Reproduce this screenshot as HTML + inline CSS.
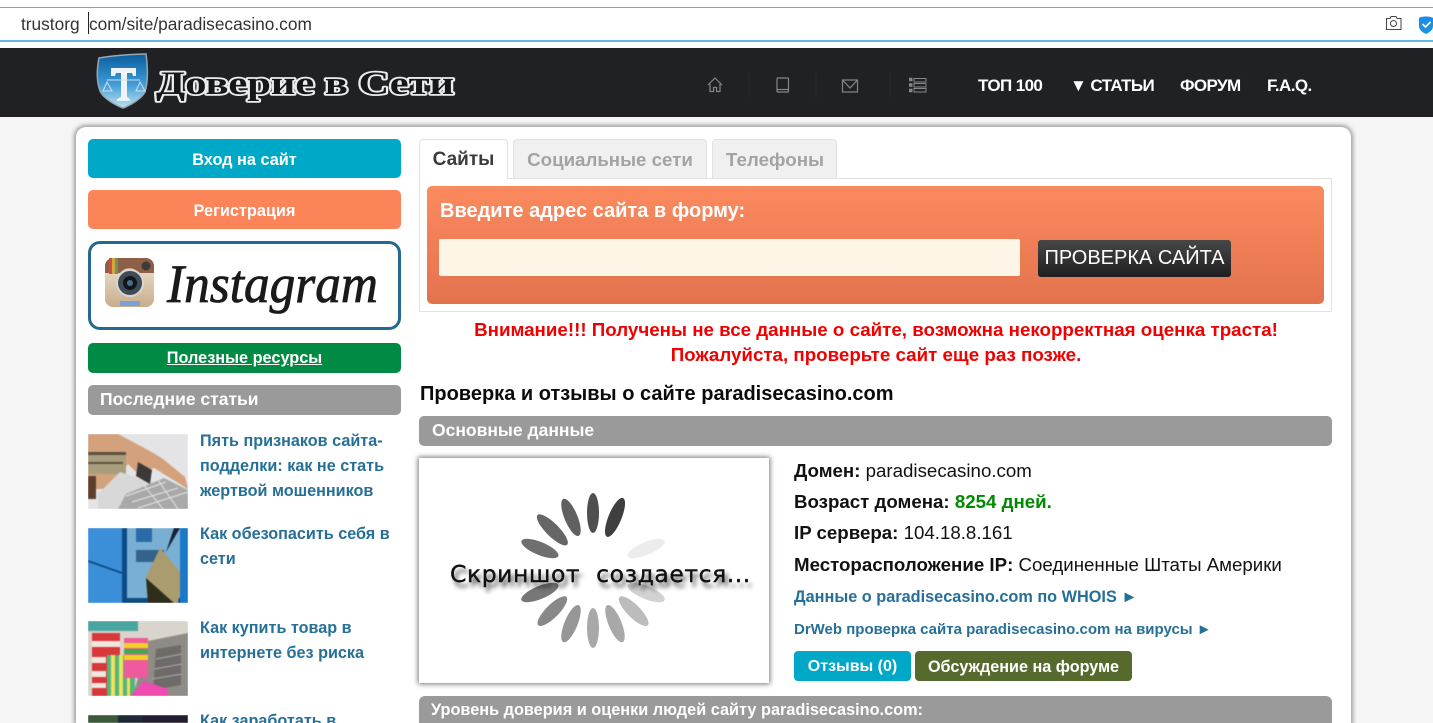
<!DOCTYPE html>
<html lang="ru"><head><meta charset="utf-8"><title>Доверие в Сети</title>
<style>
*{box-sizing:border-box}
html,body{margin:0;padding:0;width:1433px;height:723px;overflow:hidden;background:#f5f5f5;font-family:"Liberation Sans",Arial,sans-serif}
body{position:relative}
.a{position:absolute}
.t{position:absolute;white-space:nowrap;line-height:1}
.btn{position:absolute;border-radius:5px;color:#fff;font-weight:bold;text-align:center;white-space:nowrap}
.link{color:#266f96;font-weight:bold;font-size:16.2px;position:absolute;left:200px;line-height:25px;white-space:nowrap}
.nav{position:absolute;top:77px;color:#fff;font-weight:bold;font-size:17px;letter-spacing:-.6px;line-height:18px;white-space:nowrap}
.thumb{position:absolute;left:88px;width:100px;height:75px;overflow:hidden}
.thumb svg{display:block;filter:blur(.6px)}
.row{position:absolute;left:794px;font-size:18.7px;line-height:22px;color:#111;white-space:nowrap}
.row b{color:#111}
</style></head><body>
<!-- address bar -->
<div class="a" style="left:0;top:0;width:1433px;height:48px;background:#fff"></div>
<div class="a" style="left:0;top:7px;width:1433px;height:1px;background:#4fb2ee"></div>
<div class="a" style="left:0;top:40px;width:1433px;height:2px;background:#62b7e6"></div>
<div class="t" style="left:21px;top:15px;font-size:17.3px;color:#333;line-height:19px">trustorg</div>
<div class="t" style="left:89px;top:15px;font-size:17.3px;color:#333;line-height:19px">com/site/paradisecasino.com</div>
<div class="a" style="left:88px;top:12px;width:1px;height:22px;background:#222"></div>
<svg class="a" style="left:1385px;top:15px" width="48" height="20" viewBox="0 0 48 20">
<path d="M1.500 3.500h3.500l1-2h5l1 2h4v11h-14.500z" fill="none" stroke="#444" stroke-width="1"/><circle cx="8.500" cy="8.500" r="3" fill="none" stroke="#444"/>
<path d="M34 3c2-2 12-2 14 0v8c0 4-3 6-7 8-4-2-7-4-7-8z" fill="#1a8fe3"/><path d="M37.500 9l3 3 5-5" fill="none" stroke="#fff" stroke-width="1.600"/>
</svg>
<!-- header -->
<div class="a" style="left:0;top:48px;width:1433px;height:69px;background:#1f2124"></div>
<svg class="a" style="left:90px;top:48px" width="380" height="66" viewBox="0 0 380 66">
<defs><linearGradient id="sh" x1="0" y1="0" x2="0" y2="1"><stop offset="0" stop-color="#0a5d9e"/><stop offset=".55" stop-color="#3d9ad6"/><stop offset="1" stop-color="#bfe3f3"/></linearGradient></defs>
<path d="M9 10C20 8 42 6 56 6c2 13 2 29-1 38-4 7-14 13-22 16C25 57 13 50 10 43 6 32 7 20 9 10z" fill="url(#sh)" stroke="#9aa6b0" stroke-width="1.500"/>
<path d="M21 20h25v8h-3l-1-3h-5v24l3 2v2H27v-2l4-2V25h-5l-1 3h-4z" fill="#eef4f8"/>
<path d="M17 34l-4 9h9zM50 34l-4 9h9zM17 32h33" fill="none" stroke="#cfe0ea" stroke-width="1"/>
<text x="66" y="46" font-family="Liberation Serif,serif" font-size="33" font-weight="bold" textLength="298" lengthAdjust="spacingAndGlyphs" fill="#15171a" stroke="#ececec" stroke-width="3.600" stroke-linejoin="round" paint-order="stroke">Доверие в Сети</text>
</svg>
<svg class="a" style="left:700px;top:70px" width="240" height="30" viewBox="0 0 240 30" fill="none" stroke="#85888b" stroke-width="1.200">
<path d="M8 15l7-7 7 7M10 14v7.500h3.500v-4h3v4H20V14"/>
<path d="M49 3v24M116 3v24M190 3v24" stroke="#292b2e"/>
<rect x="77" y="8" width="11.500" height="14" rx="1"/><path d="M77 19.500h11.500" />
<rect x="142.500" y="10" width="15" height="12"/><path d="M142.500 10l7.500 8 7.500-8"/>
<path d="M209 9.500h3.500M209 15h3.500M209 20.500h3.500" stroke-width="3.500"/><path d="M214 8.500h12v3.500h-12zM214 13.500h12v3.500h-12zM214 18.500h12v3.500h-12z" stroke-width="1"/>
</svg>
<div class="nav" style="left:978px">ТОП 100</div>
<div class="nav" style="left:1070px">▼ СТАТЬИ</div>
<div class="nav" style="left:1180px">ФОРУМ</div>
<div class="nav" style="left:1267px">F.A.Q.</div>
<!-- card -->
<div class="a" style="left:76px;top:127px;width:1275px;height:596px;background:#fff;border-radius:10px 10px 0 0;box-shadow:0 0 4px 2px #9c9c9c;clip-path:inset(-6px -6px 0 -6px)"></div>
<!-- sidebar -->
<div class="btn" style="left:88px;top:139px;width:313px;height:39px;background:#00a8c8;font-size:16.3px;line-height:42px">Вход на сайт</div>
<div class="btn" style="left:88px;top:190px;width:313px;height:39px;background:#fb8459;font-size:16.3px;line-height:42px">Регистрация</div>
<div class="a" style="left:88px;top:241px;width:313px;height:89px;border:3px solid #24698f;border-radius:12px;background:#fff"></div>
<svg class="a" style="left:105px;top:258px" width="50" height="50" viewBox="0 0 50 50">
<defs><linearGradient id="ig" x1="0" y1="0" x2="0" y2="1"><stop offset="0" stop-color="#f0e6d6"/><stop offset="1" stop-color="#c9ad8c"/></linearGradient></defs>
<rect width="49" height="49" rx="8" fill="url(#ig)"/><path d="M0 15V8a8 8 0 0 1 8-8h33a8 8 0 0 1 8 8v7H34a12 12 0 0 0-19 0z" fill="#8d5f46"/>
<path d="M4 0h3v16H4z" fill="#c8503c"/><path d="M7 0h3v16H7z" fill="#d9a33d"/><path d="M10 0h3v16h-3z" fill="#5d9a68"/>
<circle cx="25" cy="25" r="13" fill="#3f4b55" stroke="#d6d6d2" stroke-width="2"/><circle cx="25" cy="25" r="7" fill="#10161c"/><circle cx="25" cy="25" r="3" fill="#4d6f8f"/><circle cx="41" cy="8" r="4.500" fill="#3d3a3a"/><rect x="15" y="43" width="20" height="5" fill="#7aa0d8"/>
</svg>
<div class="t" style="left:167px;top:254px;font-family:'Liberation Serif',serif;font-style:italic;font-size:54px;color:#1a1a1a;line-height:60px;-webkit-text-stroke:.8px #1a1a1a;transform-origin:0 0;transform:scaleX(.95)">Instagram</div>
<div class="btn" style="left:88px;top:343px;width:313px;height:30px;background:#008a43;font-size:16.3px;line-height:30px;text-decoration:underline">Полезные ресурсы</div>
<div class="a" style="left:88px;top:385px;width:313px;height:30px;background:#9a9a9a;border-radius:5px;color:#fff;font-weight:bold;font-size:17.5px;line-height:29px;padding-left:12px">Последние статьи</div>
<div class="thumb" style="top:434px"><svg width="100" height="75"><rect width="100" height="75" fill="#e4e4e6"/><path d="M0 0h30c15 8 35 18 45 25l22 18 3 12L66 34 50 40 40 30 20 55H0z" fill="#d3a27c"/><path d="M0 18h38v22H0z" fill="#a99e7c"/><path d="M0 18h38v3H0zM0 28h35v2H0z" fill="#5c5140"/><path d="M0 42h8v23H0z" fill="#5e3f2c"/><path d="M10 60l22-22 68 22v15H10z" fill="#d8d8d8"/><path d="M38 60l38-16 24 12v19H30z" fill="#a9a9a9"/><path d="M38 62l40-14M44 68l46-14M50 74l50-16M55 50l20 25M70 46l20 29" stroke="#e6e6e6" fill="none"/><path d="M50 28l14 8-2 14-14-8z" fill="#3c3a38"/></svg></div>
<div class="thumb" style="top:528px"><svg width="100" height="75"><rect width="100" height="75" fill="#2a7fc9"/><path d="M0 0h34v75H0z" fill="#3b8fd8"/><path d="M0 32l34 12v2L0 34z" fill="#0f4d86"/><rect x="36" y="0" width="64" height="75" fill="#7aafd4"/><path d="M34 0h5v75h-5zM36 70h64v5H36z" fill="#0e4b84"/><rect x="48" y="0" width="16" height="14" fill="#2a6ca8"/><rect x="48" y="22" width="28" height="12" fill="#33628c"/><path d="M72 20l22 26-4 29H62l-4-26z" fill="#aa9c6e"/><path d="M58 50l28 25H60z" fill="#2f2d1c"/><path d="M86 0h6L78 24z" fill="#12243a"/><rect x="92" width="8" height="75" fill="#1a78c8"/></svg></div>
<div class="thumb" style="top:621px"><svg width="100" height="75"><rect width="100" height="75" fill="#d9d5cc"/><path d="M60 20l40-8v63H45z" fill="#8f8b86"/><path d="M68 28l25-4v40l-28 5z" fill="#6e6b68"/><path d="M68 38l26-5M66 48l28-5M64 58l30-5" stroke="#b0aca8" fill="none"/><rect x="4" y="12" width="28" height="63" fill="#d8383a"/><path d="M4 20h28v6H4zM4 36h14v6H4zM4 50h14v6H4zM4 62h14v5H4z" fill="#f1e7dd"/><rect x="19" y="34" width="28" height="41" fill="#55b57e"/><path d="M23 34h4v41h-4zM31 34h4v41h-4zM39 34h3v41h-3z" fill="#efe35a"/><rect x="36" y="17" width="24" height="40" fill="#ee5a9c"/><path d="M36 22h24v5H36zM36 34h24v5H36z" fill="#f3d024"/><path d="M36 28h24v5H36z" fill="#44a853"/><path d="M42 75l14-15 24 8v7z" fill="#f04bb1"/><rect width="50" height="10" fill="#4aa6a0"/></svg></div>
<div class="thumb" style="top:715px;height:8px"><svg width="100" height="8"><rect width="100" height="8" fill="#1d2a38"/><rect width="30" height="8" fill="#3a5a3a"/><rect x="55" width="45" height="8" fill="#241c30"/></svg></div>
<div class="link" style="top:429px">Пять признаков сайта-<br>подделки: как не стать<br>жертвой мошенников</div>
<div class="link" style="top:522px">Как обезопасить себя в<br>сети</div>
<div class="link" style="top:616px">Как купить товар в<br>интернете без риска</div>
<div class="link" style="top:709px;height:14px;overflow:hidden">Как заработать в</div>
<!-- tabs -->
<div class="a" style="left:419px;top:178px;width:913px;height:134px;border:1px solid #e2e2e2"></div>
<div class="a" style="left:419px;top:139px;width:89px;height:40px;background:#fff;border:1px solid #e2e2e2;border-bottom:0;border-radius:4px 4px 0 0;font-weight:bold;font-size:19px;color:#3b3b3b;text-align:center;line-height:39px">Сайты</div>
<div class="a" style="left:513px;top:139px;width:194px;height:39px;background:#f0f0f0;border:1px solid #e2e2e2;border-bottom:0;border-radius:4px 4px 0 0;font-weight:bold;font-size:18.7px;color:#a3a3a3;text-align:center;line-height:39px">Социальные сети</div>
<div class="a" style="left:712px;top:139px;width:125px;height:39px;background:#f0f0f0;border:1px solid #e2e2e2;border-bottom:0;border-radius:4px 4px 0 0;font-weight:bold;font-size:18.8px;color:#a3a3a3;text-align:center;line-height:39px;padding-left:1px">Телефоны</div>
<!-- form -->
<div class="a" style="left:427px;top:186px;width:897px;height:118px;border-radius:5px;background:linear-gradient(#fc8a5f,#e2734d)"></div>
<div class="t" style="left:440px;top:200px;color:#fff;font-weight:bold;font-size:20px;line-height:22px">Введите адрес сайта в форму:</div>
<div class="a" style="left:439px;top:239px;width:581px;height:37px;background:#fdf5e6;border-radius:2px"></div>
<div class="a" style="left:1038px;top:240px;width:193px;height:37px;background:linear-gradient(#474747,#1f1f1f);border-radius:3px;color:#fff;font-size:20px;line-height:36px;text-align:center;white-space:nowrap">ПРОВЕРКА САЙТА</div>
<!-- warning -->
<div class="a" style="left:418px;top:317px;width:916px;color:#f00000;font-weight:bold;font-size:18.75px;line-height:25px;text-align:center;white-space:nowrap">Внимание!!! Получены не все данные о сайте, возможна некорректная оценка траста!<br>Пожалуйста, проверьте сайт еще раз позже.</div>
<div class="t" style="left:420px;top:383px;font-weight:bold;font-size:20px;line-height:23px;color:#0b0b0b">Проверка и отзывы о сайте paradisecasino.com</div>
<div class="a" style="left:419px;top:416px;width:913px;height:30px;background:#9a9a9a;border-radius:5px;color:#fff;font-weight:bold;font-size:17.5px;line-height:29px;padding-left:13px">Основные данные</div>
<!-- screenshot box -->
<div class="a" style="left:419px;top:458px;width:350px;height:225px;background:#fff;box-shadow:0 0 5px 1px #777"></div>
<svg class="a" style="left:419px;top:458px" width="350" height="225" viewBox="0 0 350 225">
<g transform="translate(174,112.500)">
<ellipse cy="-57.500" rx="6" ry="20" fill="#4f4f4f"/>
<ellipse cy="-57.500" rx="6.500" ry="21" fill="#3f3f3f" transform="rotate(22.500)"/>
<ellipse cy="-57.500" rx="6.500" ry="20" fill="#606060" transform="rotate(-22.500)"/>
<ellipse cy="-57.500" rx="6.500" ry="21" fill="#666" transform="rotate(-45)"/>
<ellipse cy="-57.500" rx="6.500" ry="20" fill="#6f6f6f" transform="rotate(-67.500)"/>
<ellipse cy="-57.500" rx="6.500" ry="20" fill="#777" transform="rotate(-112.500)"/>
<ellipse cy="-57.500" rx="6.500" ry="20" fill="#888" transform="rotate(-135)"/>
<ellipse cy="-57.500" rx="6.500" ry="20" fill="#969696" transform="rotate(-157.500)"/>
<ellipse cy="-57.500" rx="6" ry="20" fill="#a8a8a8" transform="rotate(180)"/>
<ellipse cy="-57.500" rx="6.500" ry="20" fill="#a8a8a8" transform="rotate(157.500)"/>
<ellipse cy="-57.500" rx="6.500" ry="20" fill="#bcbcbc" transform="rotate(135)"/>
<ellipse cy="-57.500" rx="6.500" ry="20" fill="#d2d2d2" transform="rotate(112.500)"/>
<ellipse cy="-57.500" rx="6.500" ry="20" fill="#ececec" transform="rotate(67.500)"/>
</g></svg>
<div class="t" style="left:450px;top:560px;font-family:'DejaVu Sans',sans-serif;font-size:23.5px;line-height:28px;letter-spacing:.55px;color:#111;-webkit-text-stroke:.4px #111;text-shadow:3px 5px 5px rgba(0,0,0,.75)">Скриншот&nbsp; создается...</div>
<!-- info -->
<div class="row" style="top:460px"><b>Домен:</b> paradisecasino.com</div>
<div class="row" style="top:491px"><b>Возраст домена:</b> <b style="color:#008a00">8254 дней.</b></div>
<div class="row" style="top:522px"><b>IP сервера:</b> 104.18.8.161</div>
<div class="row" style="top:554px"><b>Месторасположение IP:</b> Соединенные Штаты Америки</div>
<div class="t" style="left:794px;top:588px;color:#266f96;font-weight:bold;font-size:16.3px;line-height:18px">Данные о paradisecasino.com по WHOIS ►</div>
<div class="t" style="left:794px;top:621px;color:#266f96;font-weight:bold;font-size:15px;line-height:18px">DrWeb проверка сайта paradisecasino.com на вирусы ►</div>
<div class="btn" style="left:794px;top:651px;width:117px;height:30px;background:#00a8c8;font-size:16px;line-height:32px;border-radius:4px">Отзывы (0)</div>
<div class="btn" style="left:915px;top:651px;width:217px;height:30px;background:#566a2e;font-size:16.2px;line-height:32px;border-radius:4px">Обсуждение на форуме</div>
<div class="a" style="left:419px;top:696px;width:913px;height:27px;background:#9a9a9a;border-radius:6px 6px 0 0;color:#fff;font-weight:bold;font-size:16.3px;line-height:28px;padding-left:12px;white-space:nowrap;overflow:hidden">Уровень доверия и оценки людей сайту paradisecasino.com:</div>
</body></html>
